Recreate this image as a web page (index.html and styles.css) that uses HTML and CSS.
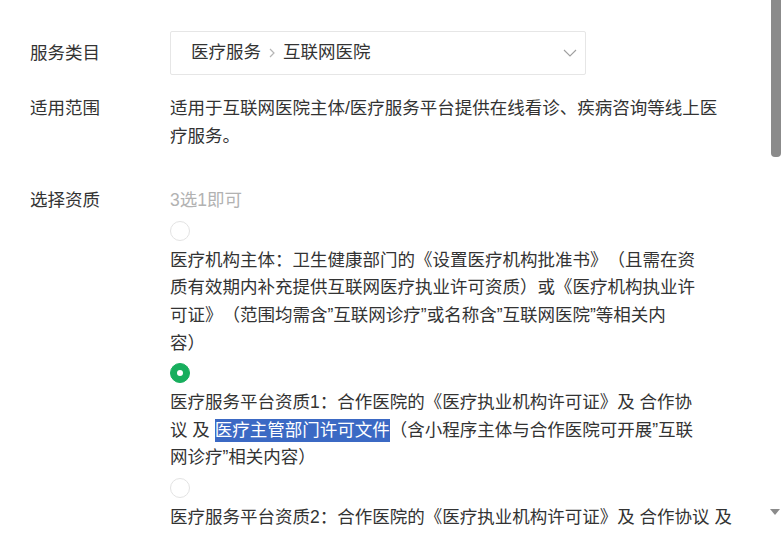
FILE: index.html
```html
<!DOCTYPE html>
<html lang="zh-CN">
<head>
    <meta charset="UTF-8">
    <meta name="viewport" content="width=device-width, initial-scale=1.0">
    <title>服务类目</title>
    <link rel="stylesheet" href="styles.css">
</head>
<body>
    <div class="form">
        <div class="row row-select">
            <div class="label">服务类目</div>
            <div class="field">
                <div class="select">
                    <span>医疗服务</span>
                    <svg class="sep" width="6" height="10" viewBox="0 0 6 10"><path d="M1 1l4 4-4 4" fill="none" stroke="#b5b5b5" stroke-width="1.2"/></svg>
                    <span>互联网医院</span>
                    <svg class="arrow" width="14" height="8" viewBox="0 0 14 8"><path d="M1 1l6 6 6-6" fill="none" stroke="#a0a0a0" stroke-width="1.1"/></svg>
                </div>
            </div>
        </div>

        <div class="row row-scope">
            <div class="label">适用范围</div>
            <div class="field scope">适用于互联网医院主体/医疗服务平台提供在线看诊、疾病咨询等线上医疗服务。</div>
        </div>

        <div class="row row-qual">
            <div class="label">选择资质</div>
            <div class="field">
                <div class="hint">3选1即可</div>

                <div class="option">
                    <span class="radio"></span>
                    <p class="desc">医疗机构主体：卫生健康部门的《设置医疗机构批准书》（且需在资质有效期内补充提供互联网医疗执业许可资质）或《医疗机构执业许可证》（范围均需含”互联网诊疗”或名称含”互联网医院”等相关内容）</p>
                </div>

                <div class="option">
                    <span class="radio checked"></span>
                    <p class="desc">医疗服务平台资质1：合作医院的《医疗执业机构许可证》及 合作协议 及 <span class="mark">医疗主管部门许可文件</span>（含小程序主体与合作医院可开展”互联网诊疗”相关内容）</p>
                </div>

                <div class="option">
                    <span class="radio"></span>
                    <p class="desc wide">医疗服务平台资质2：合作医院的《医疗执业机构许可证》及 合作协议 及 医疗主管部门许可文件（含小程序主体与合作医院可开展”互联网诊疗”相关内容）</p>
                </div>
            </div>
        </div>
    </div>

    <div class="scrollbar">
        <div class="thumb"></div>
        <div class="down"></div>
    </div>
</body>
</html>
```

FILE: styles.css
```css
html, body {
    margin: 0;
    height: 100%;
}
body {
    font-family: "Liberation Sans", "Noto Sans CJK SC", sans-serif;
    font-size: 17.5px;
    line-height: 27.6px;
    color: #333333;
    background-color: #ffffff;
    overflow: hidden;
    text-spacing-trim: space-all;
}
.form {
    padding: 31px 0 0 30px;
}
.row {
    display: flex;
}
.label {
    width: 140px;
    flex: none;
}
.row-select .label {
    line-height: 44px;
}
.row-scope {
    margin-top: 20px;
}
.row-qual {
    margin-top: 37px;
}
.select {
    width: 416px;
    height: 44px;
    box-sizing: border-box;
    border: 1px solid #e6e6e6;
    border-radius: 2px;
    padding: 0 8px 0 20px;
    display: flex;
    align-items: center;
}
.sep {
    margin: 0 8px;
}
.arrow {
    margin-left: auto;
}
.scope {
    width: 556px;
}
.hint {
    color: #b2b2b2;
}
.radio {
    display: flex;
    align-items: center;
    justify-content: center;
    width: 20px;
    height: 20px;
    box-sizing: border-box;
    border: 1px solid #e3e3e3;
    border-radius: 50%;
    margin: 6px 0 6px;
}
.radio.checked {
    background-color: #17ae5d;
    border-color: #17ae5d;
}
.radio.checked::after {
    content: "";
    width: 6px;
    height: 6px;
    border-radius: 50%;
    background-color: #ffffff;
}
.desc {
    margin: 0;
    width: 528px;
}
.desc.wide {
    width: 570px;
}
.mark {
    background-color: #3b69c4;
    color: #ffffff;
    padding: 1px 0 2px;
}
.scrollbar {
    position: fixed;
    top: 0;
    right: 0;
    width: 12px;
    height: 100%;
}
.thumb {
    margin-left: 2px;
    width: 10px;
    height: 157px;
    background-color: #8b8b8b;
    border-radius: 0 0 4px 4px;
}
.down {
    position: absolute;
    top: 509px;
    left: 1px;
    width: 0;
    height: 0;
    border-left: 5px solid transparent;
    border-right: 5px solid transparent;
    border-top: 6px solid #8b8b8b;
}
```
